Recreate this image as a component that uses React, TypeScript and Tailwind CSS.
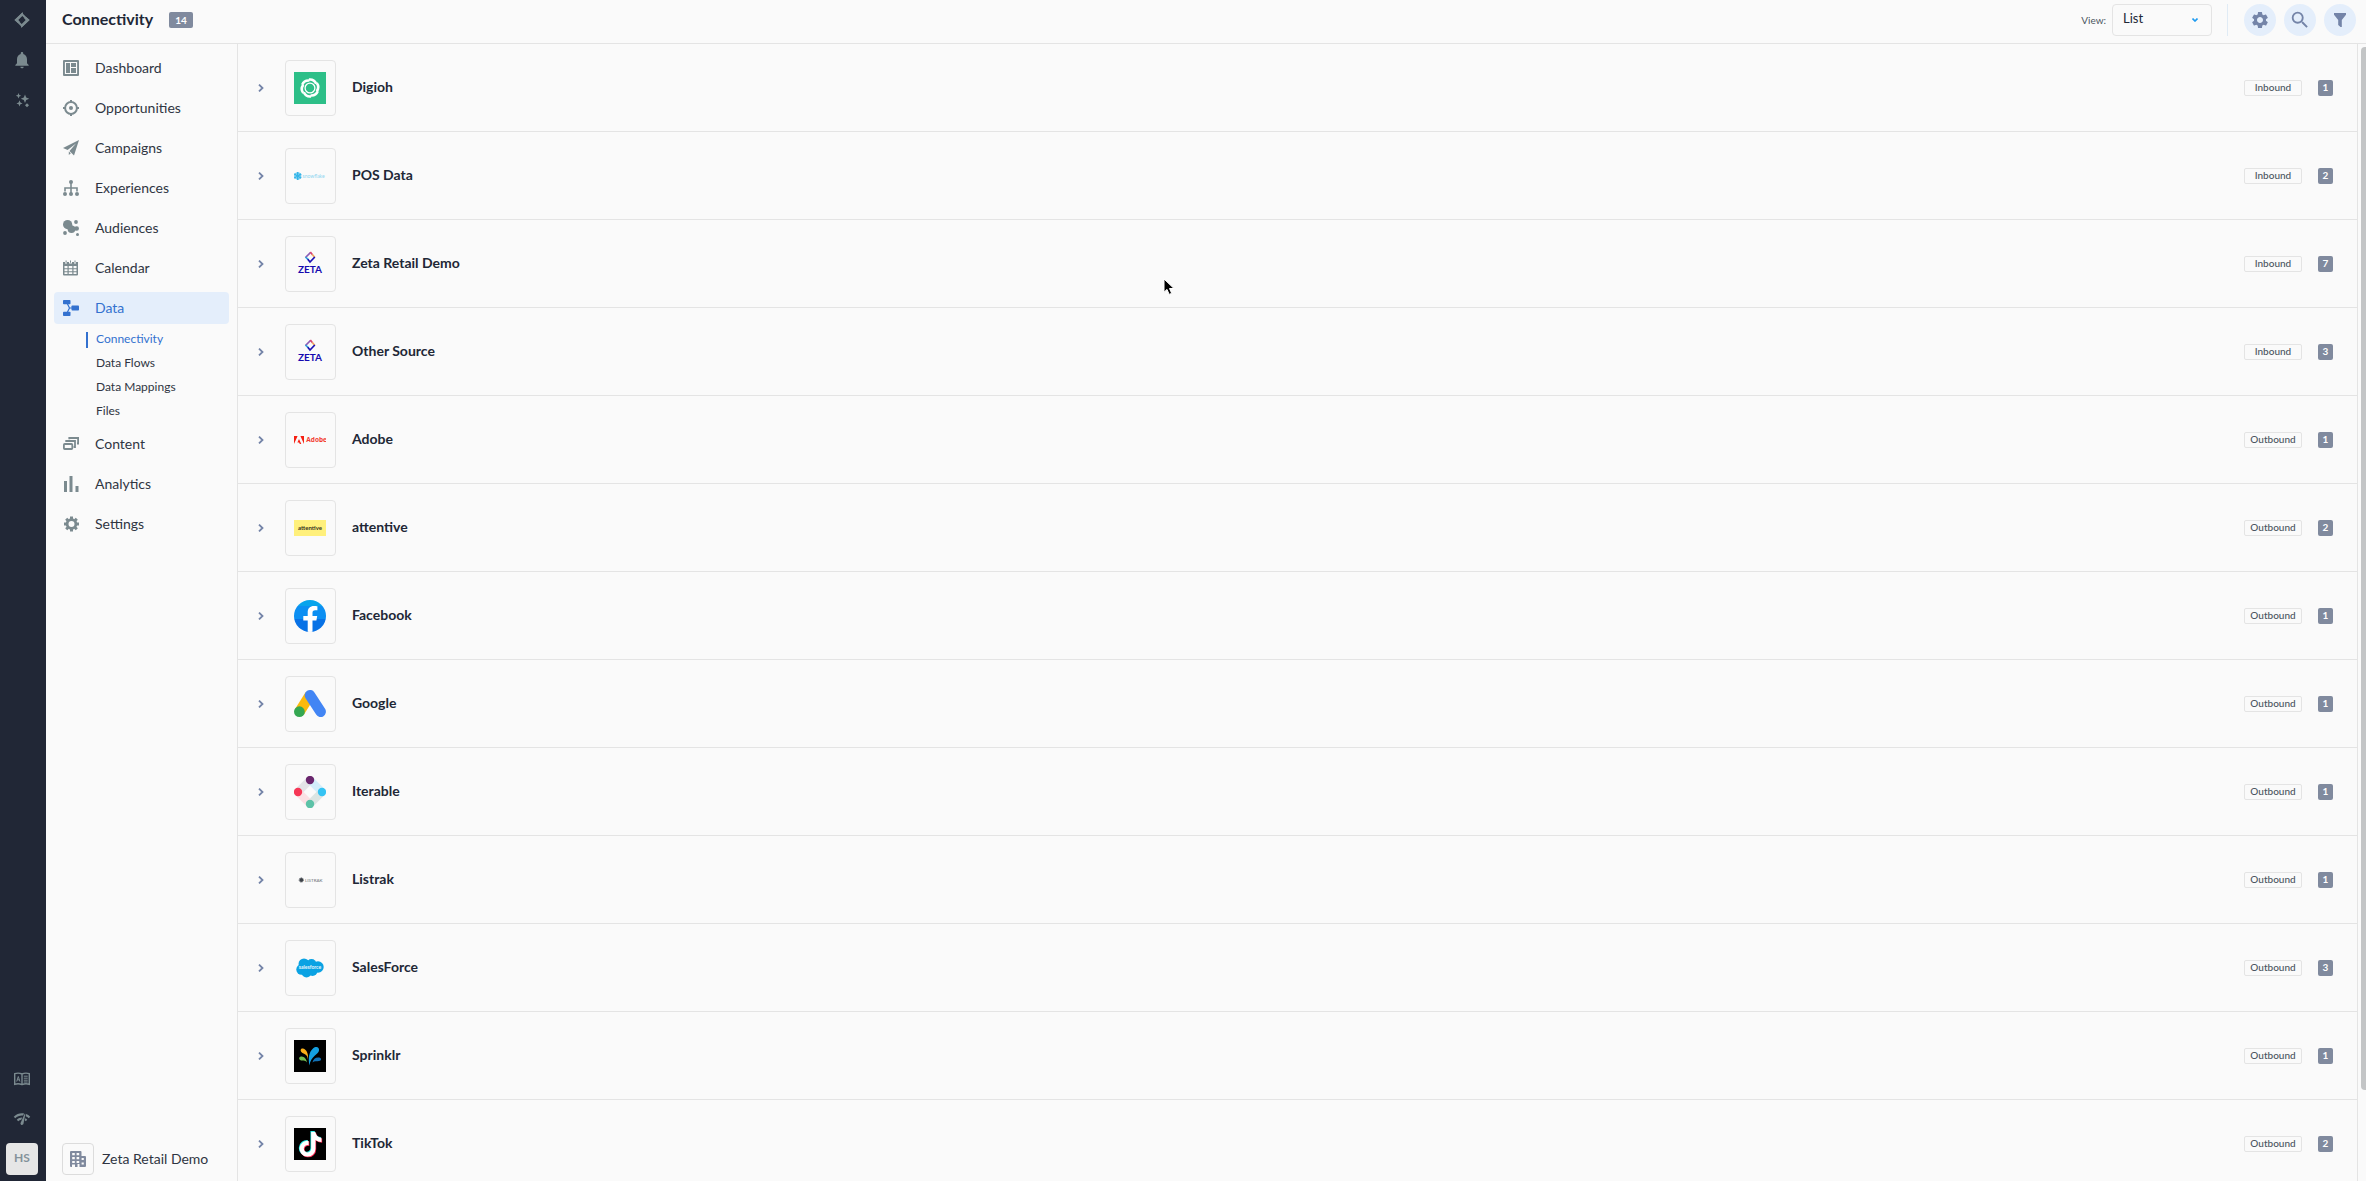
import type { ReactNode } from "react"
import { FaTiktok } from "react-icons/fa6"
import { MdNetworkCheck, MdNotifications, MdSearch, MdSettings } from "react-icons/md"

type IconProps = { className?: string }

function Icon({ className = "size-4", children }: { className?: string; children: ReactNode }) {
  return (
    <svg viewBox="0 0 16 16" fill="currentColor" className={className} aria-hidden="true">
      {children}
    </svg>
  )
}

function ZetaMark({ className }: IconProps) {
  return (
    <Icon className={className}>
      <path d="M9 0v3.2L4.2 8l1.6 1.6L4.2 11.2 0.3 8z" />
      <path d="M7 16v-3.2L11.8 8l-1.6-1.6 1.6-1.6L15.8 8z" />
      <path d="M8 2.2 13.8 8 8 13.8 2.2 8z" fill="none" stroke="currentColor" strokeWidth="2" />
    </Icon>
  )
}

function SparkleIcon() {
  return (
    <Icon>
      <path d="M4.5 1l.8 1.9 1.9.8-1.9.8-.8 1.9-.8-1.9-1.9-.8 1.9-.8z" />
      <path d="M11 2.500l1.200 3 3 1.200-3 1.200-1.200 3-1.200-3-3-1.200 3-1.200z" />
      <path d="M5.500 8.300l.9 2.200 2.200.9-2.200.9-.9 2.200-.9-2.200-2.200-.9 2.200-.9z" />
      <path d="M13 11.200l2 2-2 2-2-2z" />
    </Icon>
  )
}

function BookIcon() {
  return (
    <Icon>
      <path
        d="M.7 2.700Q4.500 1.500 8 3q3.500-1.500 7.300-.3v10.600Q11.500 12.100 8 13.600q-3.500-1.500-7.300-.3zM8 3v10.500"
        fill="none"
        stroke="currentColor"
        strokeWidth="1.400"
      />
      <path
        d="M9.800 5.200h3.900M9.800 7.200h3.900M9.800 9.200h3.900M9.800 11h3.900M2.700 10.500l1.600-5 1.600 5M3.200 8.800h2.200"
        fill="none"
        stroke="currentColor"
        strokeWidth="1"
      />
    </Icon>
  )
}

function DashboardIcon() {
  return (
    <Icon>
      <path
        fillRule="evenodd"
        d="M1 0h14a1 1 0 0 1 1 1v14a1 1 0 0 1-1 1H1a1 1 0 0 1-1-1V1a1 1 0 0 1 1-1zm.9 1.900v12.200h12.200V1.900z"
      />
      <path d="M3 3h4v10H3zM8 3h5v4H8zM8 8h5v5H8z" />
    </Icon>
  )
}

function TargetIcon() {
  return (
    <Icon>
      <circle cx="8" cy="8" r="5.900" fill="none" stroke="currentColor" strokeWidth="2" />
      <circle cx="8" cy="8" r="2" />
      <path d="M7 0h2v2H7zM7 14h2v2H7zM0 7h2v2H0zM14 7h2v2h-2z" />
    </Icon>
  )
}

function PlaneIcon() {
  return (
    <Icon>
      <path d="M16 0 0 8l4.600 1.900L13 3.500 6.500 11 11 15.500z" />
      <path d="M5.800 11.500v3.500l2-1.700z" />
    </Icon>
  )
}

function TreeIcon() {
  return (
    <Icon>
      <circle cx="8" cy="2" r="2" />
      <circle cx="2" cy="14" r="2" />
      <circle cx="8" cy="14" r="2" />
      <circle cx="14" cy="14" r="2" />
      <path d="M8 3v10M2 11.500V8h12v3.500" fill="none" stroke="currentColor" strokeWidth="1.600" />
    </Icon>
  )
}

function AudienceIcon() {
  return (
    <Icon>
      <circle cx="4.600" cy="4.600" r="4.600" />
      <circle cx="8.500" cy="9.200" r="3.800" />
      <circle cx="13.800" cy="8.500" r="2.200" />
      <circle cx="13" cy="2" r="1.900" />
      <circle cx="2" cy="13" r="1.900" />
      <circle cx="14.500" cy="14.500" r="1.500" />
      <path d="M8.500 4 10 6.500l4 .5v3l-4 1L4 8.500z" />
    </Icon>
  )
}

function CalendarIcon() {
  return (
    <Icon>
      <path
        fillRule="evenodd"
        d="M0 2h2v1.500h2V2h2v1.500h3V2h2v1.500h2V2h2v12.500a1 1 0 0 1-1 1H1a1 1 0 0 1-1-1zM1.500 6v2.200h3V6zm4.200 0v2.200h3.600V6zm4.800 0v2.200h3V6zm-9 3.200v2h3v-2zm4.200 0v2h3.600v-2zm4.800 0v2h3v-2zm-9 3v1.900h3v-1.900zm4.200 0v1.900h3.600v-1.900zm4.800 0v1.900h3v-1.900z"
      />
      <path d="M2.600.5h1v2.300h-1zM7 .5h1v2.300H7zM11.500.5h1v2.300h-1z" />
    </Icon>
  )
}

function DataIcon() {
  return (
    <Icon>
      <rect x="0" y="0" width="7.500" height="4.200" rx=".8" />
      <rect x="0" y="11.800" width="7.500" height="4.200" rx=".8" />
      <rect x="8.500" y="5.500" width="7.500" height="5" rx=".8" />
      <path d="M4 3l2.500 5L4 13M6 8h3" fill="none" stroke="currentColor" strokeWidth="1.200" />
    </Icon>
  )
}

function ContentIcon() {
  return (
    <Icon>
      <rect x=".9" y="8" width="8.400" height="5" rx=".8" fill="none" stroke="currentColor" strokeWidth="1.800" />
      <path d="M3.200 6V5h8.800v6H10.600M6.300 3.200V2h8.800v5.500H14" fill="none" stroke="currentColor" strokeWidth="1.800" />
    </Icon>
  )
}

function AnalyticsIcon() {
  return (
    <Icon>
      <path d="M1 5h3v11H1zM6.500 0h3v16h-3zM12.500 10h3v6h-3z" />
    </Icon>
  )
}

function CogIcon() {
  return (
    <Icon>
      <circle cx="8.500" cy="8" r="4.400" fill="none" stroke="currentColor" strokeWidth="2.800" />
      <path
        d="M8.500.5v2.700M8.500 12.800v2.700M1 8h2.700M13.300 8h2.700M3.200 2.700 5 4.500M12 11.500l1.800 1.800M3.200 13.300 5 11.500M12 4.500l1.800-1.800"
        stroke="currentColor"
        strokeWidth="3"
      />
    </Icon>
  )
}

function BuildingIcon() {
  return (
    <Icon>
      <path
        fillRule="evenodd"
        d="M1 0h9.500a1 1 0 0 1 1 1v4H15a1 1 0 0 1 1 1v9a1 1 0 0 1-1 1H9.500v-3h-2v3H1a1 1 0 0 1-1-1V1a1 1 0 0 1 1-1zm1.200 2v2.300h2.600V2zm4.400 0v2.300h2.600V2zM2.200 6v2.300h2.600V6zm4.400 0v2.300h2.600V6zm-4.400 4v2h2.600v-2zm4.400 0v2h2.600v-2zm5-3v2h2.200V7zm0 4.500v2h2.200v-2zM2 13.500V16h3v-2.500z"
      />
    </Icon>
  )
}

function FilterIcon() {
  return (
    <Icon>
      <path d="M2 1h12v1.800L9.800 8v7H8.500L6.200 13V8L2 2.800z" />
    </Icon>
  )
}

function Logo({ children }: { children: ReactNode }) {
  return (
    <svg viewBox="0 0 32 32" className="size-8" aria-hidden="true">
      {children}
    </svg>
  )
}

function DigiohLogo() {
  const blades = [0, 60, 120, 180, 240, 300]
  return (
    <Logo>
      <path d="M0 0h32v32H0z" fill="#2dbf88" />
      {blades.map((angle) => (
        <path
          key={angle}
          d="M15 7.600Q20 7 22.200 11.800"
          transform={`rotate(${angle} 16 16)`}
          fill="none"
          stroke="#fff"
          strokeWidth="2.600"
        />
      ))}
      <circle cx="16" cy="16" r="4.900" fill="none" stroke="#fff" strokeWidth="1.300" />
    </Logo>
  )
}

function SnowflakeLogo() {
  return (
    <Logo>
      <circle cx="3.700" cy="16" r="3" fill="none" stroke="#7fd0f1" strokeWidth="1.400" />
      <g stroke="#35b5e8" strokeWidth="1.500">
        <path d="M3.700 12v8M.2 14l7 4M7.200 14l-7 4" />
      </g>
      <text x="8.500" y="17.800" fontSize="5" fill="#8fd5f0" fontFamily="Lato, sans-serif">
        snowflake
      </text>
    </Logo>
  )
}

function ZetaLogo() {
  return (
    <Logo>
      <g fill="none" strokeWidth="1.700">
        <path d="M16.500 4.500 11.500 9.500" stroke="#8d5bb5" />
        <path d="M16.300 4l2.200 2.700" stroke="#d8436f" />
        <path d="M18.300 6.500l2.500 3" stroke="#f0a35e" />
        <path d="M11.500 9l2.700 2.700" stroke="#2f9bd8" />
        <path d="M13.800 11.300l2.200 2.700 4.800-5" stroke="#1a10b4" />
      </g>
      <text x="16" y="25" fontSize="10" fontWeight="700" fill="#1509b0" textAnchor="middle" fontFamily="Lato, sans-serif">
        ZETA
      </text>
    </Logo>
  )
}

function AdobeLogo() {
  return (
    <Logo>
      <path d="M0 12h3.600L0 20zM6.400 12H10v8zM5 14.900l2.300 5.100H5.800l-.7-1.600H3.400z" fill="#f61f12" />
      <text x="12.300" y="18.400" fontSize="6.500" fontWeight="700" fill="#f23a30" fontFamily="Open Sans, sans-serif">
        Adobe
      </text>
    </Logo>
  )
}

function AttentiveLogo() {
  return (
    <Logo>
      <path d="M0 8h32v16H0z" fill="#fff07c" />
      <text x="16" y="18" fontSize="6" fontWeight="700" fill="#33301f" textAnchor="middle" fontFamily="Lato, sans-serif">
        attentive
      </text>
    </Logo>
  )
}

function FacebookLogo() {
  return (
    <Logo>
      <clipPath id="facebook-disc">
        <circle cx="16" cy="16" r="16" />
      </clipPath>
      <g clipPath="url(#facebook-disc)">
        <path d="M0 0h32v6H0z" fill="#08a4ec" />
        <path d="M0 6h32v13H0z" fill="#0c8ff2" />
        <path d="M0 19h32v13H0z" fill="#0872e6" />
        <path d="M13.700 32V20.500H9.300V16h4.400v-3.500C13.700 8.300 16 6 20 6c1.300 0 2.800.2 3.400.3v4h-2.200c-2 0-2.700 1.200-2.700 2.500V16h4.700l-.8 4.500h-3.900V32z" fill="#fff" />
      </g>
    </Logo>
  )
}

function GoogleLogo() {
  return (
    <Logo>
      <path d="M16 7 5.400 24" stroke="#fbb90d" strokeWidth="10.500" />
      <path d="M16 7.300 26.600 23.700" stroke="#4285f4" strokeWidth="10.600" strokeLinecap="round" />
      <circle cx="5.400" cy="23.700" r="5.400" fill="#34a751" />
    </Logo>
  )
}

function IterableLogo() {
  return (
    <Logo>
      <g strokeWidth="8">
        <path d="M4 16 16 4" stroke="#e4e4e7" />
        <path d="M16 4l12 12" stroke="#d3eefb" />
        <path d="M28 16 16 28" stroke="#dbe5e3" />
        <path d="M16 28 4 16" stroke="#fbe0e4" />
      </g>
      <circle cx="16" cy="4" r="4.200" fill="#6a266d" />
      <circle cx="28" cy="16" r="4.200" fill="#35c3f3" />
      <circle cx="16" cy="28" r="4.200" fill="#5cc2a7" />
      <circle cx="4" cy="16" r="4.200" fill="#f63756" />
    </Logo>
  )
}

function ListrakLogo() {
  return (
    <Logo>
      <circle cx="7.300" cy="16" r="2" fill="#3c4147" />
      <circle cx="7.300" cy="16" r="2.200" fill="none" stroke="#555b61" strokeWidth=".8" strokeDasharray="1.200 .6" />
      <text x="11" y="17.700" fontSize="4.500" fill="#6d7277" fontFamily="Lato, sans-serif">
        LISTRAK
      </text>
    </Logo>
  )
}

function SalesforceLogo() {
  return (
    <Logo>
      <g fill="#0aa2e3">
        <circle cx="10" cy="12" r="5.500" />
        <circle cx="17.500" cy="12" r="5" />
        <circle cx="24" cy="15" r="5.700" />
        <circle cx="7.500" cy="17.500" r="5.200" />
        <circle cx="12.500" cy="20.500" r="5" />
        <circle cx="18.500" cy="19" r="5" />
      </g>
      <text x="16" y="17.300" fontSize="5" fontWeight="700" fill="#e9f7fd" textAnchor="middle" fontFamily="Lato, sans-serif">
        salesforce
      </text>
    </Logo>
  )
}

function SprinklrLogo() {
  return (
    <Logo>
      <path d="M0 0h32v32H0z" />
      <path d="M15.500 25.500C14 18 15 12 19 8.500c3-2.500 6.500-1.500 6 2-.5 4-8.500 5.500-9.500 15z" fill="#14a0e2" />
      <path d="M14 19.500C13.500 15 11.500 14.500 8.500 13 5.500 11 6.500 8 9 8.500c4 1 5.500 6 5 11z" fill="#fbaf17" />
      <path d="M13 22.500c-1.500-2.500-3-1.500-5.500-2-3-.7-3-3.500-.5-4 3-.5 5.500 2.500 6 6z" fill="#74bd50" />
      <path d="M18.500 22.500c.5-3.500 3.500-5.500 6.500-5 3 .3 2.500 3.300 0 3.600-2.500.3-4.500-.1-6.500 1.400z" fill="#1272b8" />
    </Logo>
  )
}

function TikTokLogo() {
  return (
    <Logo>
      <path d="M0 0h32v32H0z" />
      <FaTiktok x="3.300" y="3" size={25} color="#2af0ea" />
      <FaTiktok x="4.700" y="4.400" size={25} color="#fe2c55" />
      <FaTiktok x="4" y="3.700" size={25} color="#fff" />
    </Logo>
  )
}

const navItems = [
  { label: "Dashboard", icon: <DashboardIcon /> },
  { label: "Opportunities", icon: <TargetIcon /> },
  { label: "Campaigns", icon: <PlaneIcon /> },
  { label: "Experiences", icon: <TreeIcon /> },
  { label: "Audiences", icon: <AudienceIcon /> },
  { label: "Calendar", icon: <CalendarIcon /> },
  {
    label: "Data",
    icon: <DataIcon />,
    active: true,
    children: ["Connectivity", "Data Flows", "Data Mappings", "Files"],
  },
  { label: "Content", icon: <ContentIcon /> },
  { label: "Analytics", icon: <AnalyticsIcon /> },
  { label: "Settings", icon: <CogIcon /> },
]

const sources = [
  { name: "Digioh", direction: "Inbound", count: 1, logo: <DigiohLogo /> },
  { name: "POS Data", direction: "Inbound", count: 2, logo: <SnowflakeLogo /> },
  { name: "Zeta Retail Demo", direction: "Inbound", count: 7, logo: <ZetaLogo /> },
  { name: "Other Source", direction: "Inbound", count: 3, logo: <ZetaLogo /> },
  { name: "Adobe", direction: "Outbound", count: 1, logo: <AdobeLogo /> },
  { name: "attentive", direction: "Outbound", count: 2, logo: <AttentiveLogo /> },
  { name: "Facebook", direction: "Outbound", count: 1, logo: <FacebookLogo /> },
  { name: "Google", direction: "Outbound", count: 1, logo: <GoogleLogo /> },
  { name: "Iterable", direction: "Outbound", count: 1, logo: <IterableLogo /> },
  { name: "Listrak", direction: "Outbound", count: 1, logo: <ListrakLogo /> },
  { name: "SalesForce", direction: "Outbound", count: 3, logo: <SalesforceLogo /> },
  { name: "Sprinklr", direction: "Outbound", count: 1, logo: <SprinklrLogo /> },
  { name: "TikTok", direction: "Outbound", count: 2, logo: <TikTokLogo /> },
]

function RailButton({ label, children }: { label: string; children: ReactNode }) {
  return (
    <button type="button" aria-label={label} className="flex size-8 items-center justify-center">
      {children}
    </button>
  )
}

function Rail() {
  return (
    <aside className="flex w-[46px] shrink-0 flex-col justify-between bg-[#212736] pt-1 pb-1.5 pl-1.5 text-[#7b8a8f]">
      <div className="flex flex-col gap-2">
        <RailButton label="Home">
          <ZetaMark className="size-4" />
        </RailButton>
        <RailButton label="Notifications">
          <MdNotifications className="size-5" />
        </RailButton>
        <RailButton label="Assistant">
          <SparkleIcon />
        </RailButton>
      </div>
      <div className="flex flex-col gap-2">
        <RailButton label="Documentation">
          <BookIcon />
        </RailButton>
        <RailButton label="Status">
          <MdNetworkCheck className="size-[18px]" />
        </RailButton>
        <button type="button" className="size-8 rounded bg-[#e6e6e6] pb-0.5 text-[12px] font-bold text-[#84929a]">
          HS
        </button>
      </div>
    </aside>
  )
}

function Header() {
  return (
    <header className="flex h-11 shrink-0 items-start justify-between border-b border-[#e4e4e4] pt-1 pr-[10px] pl-4">
      <div className="flex h-8 items-center gap-4">
        <h1 className="pb-0.5 text-[16px] font-bold text-[#212736]">Connectivity</h1>
        <span className="flex h-4 w-6 items-center justify-center rounded-xs bg-[#808a9e] text-[10px] font-bold text-white">
          14
        </span>
      </div>
      <div className="flex h-8 items-center">
        <label htmlFor="view" className="mr-1.5 text-[10px] text-[#4a5560]">
          View:
        </label>
        <div className="relative">
          <select
            id="view"
            className="block h-8 w-[100px] appearance-none rounded border border-[#e4e4e4] bg-transparent pb-0.5 pl-[10px] text-[13px] text-[#212736]"
          >
            <option>List</option>
          </select>
          <svg viewBox="0 0 6 4" className="pointer-events-none absolute top-[14px] right-[14px] h-1 w-1.5" aria-hidden="true">
            <path d="M.5.5 3 3 5.500.5" fill="none" stroke="#1e9bf0" strokeWidth="1.600" />
          </svg>
        </div>
        <div className="mr-4 ml-[15px] h-8 w-px bg-[#e0ebf5]" />
        <div className="flex gap-2 text-[#7484a8]">
          <button type="button" aria-label="Settings" className="flex size-8 items-center justify-center rounded-full bg-[#e4eefb]">
            <MdSettings className="size-5" />
          </button>
          <button type="button" aria-label="Search" className="flex size-8 items-center justify-center rounded-full bg-[#e4eefb]">
            <MdSearch className="size-[22px]" />
          </button>
          <button type="button" aria-label="Filter" className="flex size-8 items-center justify-center rounded-full bg-[#e4eefb]">
            <FilterIcon />
          </button>
        </div>
      </div>
    </header>
  )
}

function Sidebar() {
  return (
    <nav className="flex w-48 shrink-0 flex-col justify-between border-r border-[#e4e4e4] px-2 pt-2 pb-1.5">
      <ul className="flex flex-col gap-2">
        {navItems.map((item) => (
          <li key={item.label}>
            <a
              href="#"
              className={
                item.active
                  ? "flex h-8 items-center gap-4 rounded bg-[#e4eefb] pl-[9px] text-[14px] text-[#3371cf]"
                  : "flex h-8 items-center gap-4 rounded pl-[9px] text-[14px] text-[#2f3542]"
              }
            >
              <span className={item.active ? "text-[#3371cf]" : "text-[#7b8a8f]"}>{item.icon}</span>
              <span className="pb-0.5">{item.label}</span>
            </a>
            {item.children && (
              <ul className="-mb-1 pt-1 pl-8">
                {item.children.map((child, i) => (
                  <li key={child} className="flex h-6 items-center">
                    <a
                      href="#"
                      className={
                        i === 0
                          ? "flex h-4 items-center border-l-2 border-[#3371cf] pb-0.5 pl-2 text-[12px] text-[#3371cf]"
                          : "flex h-4 items-center border-l-2 border-transparent pb-0.5 pl-2 text-[12px] text-[#2f3542]"
                      }
                    >
                      {child}
                    </a>
                  </li>
                ))}
              </ul>
            )}
          </li>
        ))}
      </ul>
      <button type="button" className="flex items-center gap-2 pl-2 text-[14px] text-[#2f3542]">
        <span className="flex size-8 items-center justify-center rounded border border-[#dcdcdc] text-[#808a9e]">
          <BuildingIcon />
        </span>
        <span className="pb-0.5">Zeta Retail Demo</span>
      </button>
    </nav>
  )
}

function SourceRow({ source }: { source: (typeof sources)[number] }) {
  return (
    <li className="flex h-[88px] shrink-0 items-center border-b border-[#e4e4e4] pr-6 pl-[15px]">
      <button type="button" aria-label={`Expand ${source.name}`} className="flex size-4 items-center justify-center">
        <svg viewBox="0 0 6 8" className="h-2 w-1.5" aria-hidden="true">
          <path d="M1 .6 4.500 4 1 7.400" fill="none" stroke="#7484a8" strokeWidth="1.800" />
        </svg>
      </button>
      <div className="ml-4 flex h-14 w-[51px] items-center rounded border border-[#e4e4e4] pl-2">{source.logo}</div>
      <h2 className="ml-4 pb-0.5 text-[14px] font-bold text-[#212736]">{source.name}</h2>
      <span className="ml-auto flex h-4 w-[58px] items-center justify-center rounded-xs border border-[#e4e4e4] text-[10px] font-medium text-[#4a5560]">
        {source.direction}
      </span>
      <span className="ml-4 flex h-4 w-[15px] items-center justify-center rounded-xs bg-[#808a9e] text-[10px] font-bold text-white">
        {source.count}
      </span>
    </li>
  )
}

export default function App() {
  return (
    <div className="relative flex h-screen overflow-hidden bg-[#fafafa] font-['Lato',sans-serif]">
      <Rail />
      <div className="flex min-w-0 flex-1 flex-col">
        <Header />
        <div className="flex min-h-0 flex-1">
          <Sidebar />
          <main className="flex min-w-0 flex-1">
            <ul className="flex flex-1 flex-col overflow-hidden border-r border-[#e4e4e4]">
              {sources.map((source) => (
                <SourceRow key={source.name} source={source} />
              ))}
            </ul>
            <div className="w-2 pt-[3px] pl-[3px]">
              <div className="h-[92%] rounded-l-sm bg-[#c3c5c6]" />
            </div>
          </main>
        </div>
      </div>
      <svg viewBox="0 0 12 18" className="pointer-events-none absolute top-[278px] left-[1163px] h-[18px] w-3" aria-hidden="true">
        <path d="M1 1v13.200l3-2.800 2.200 5 2.500-1.100-2.200-4.800H11z" fill="#000" stroke="#fff" strokeWidth="1" />
      </svg>
    </div>
  )
}
